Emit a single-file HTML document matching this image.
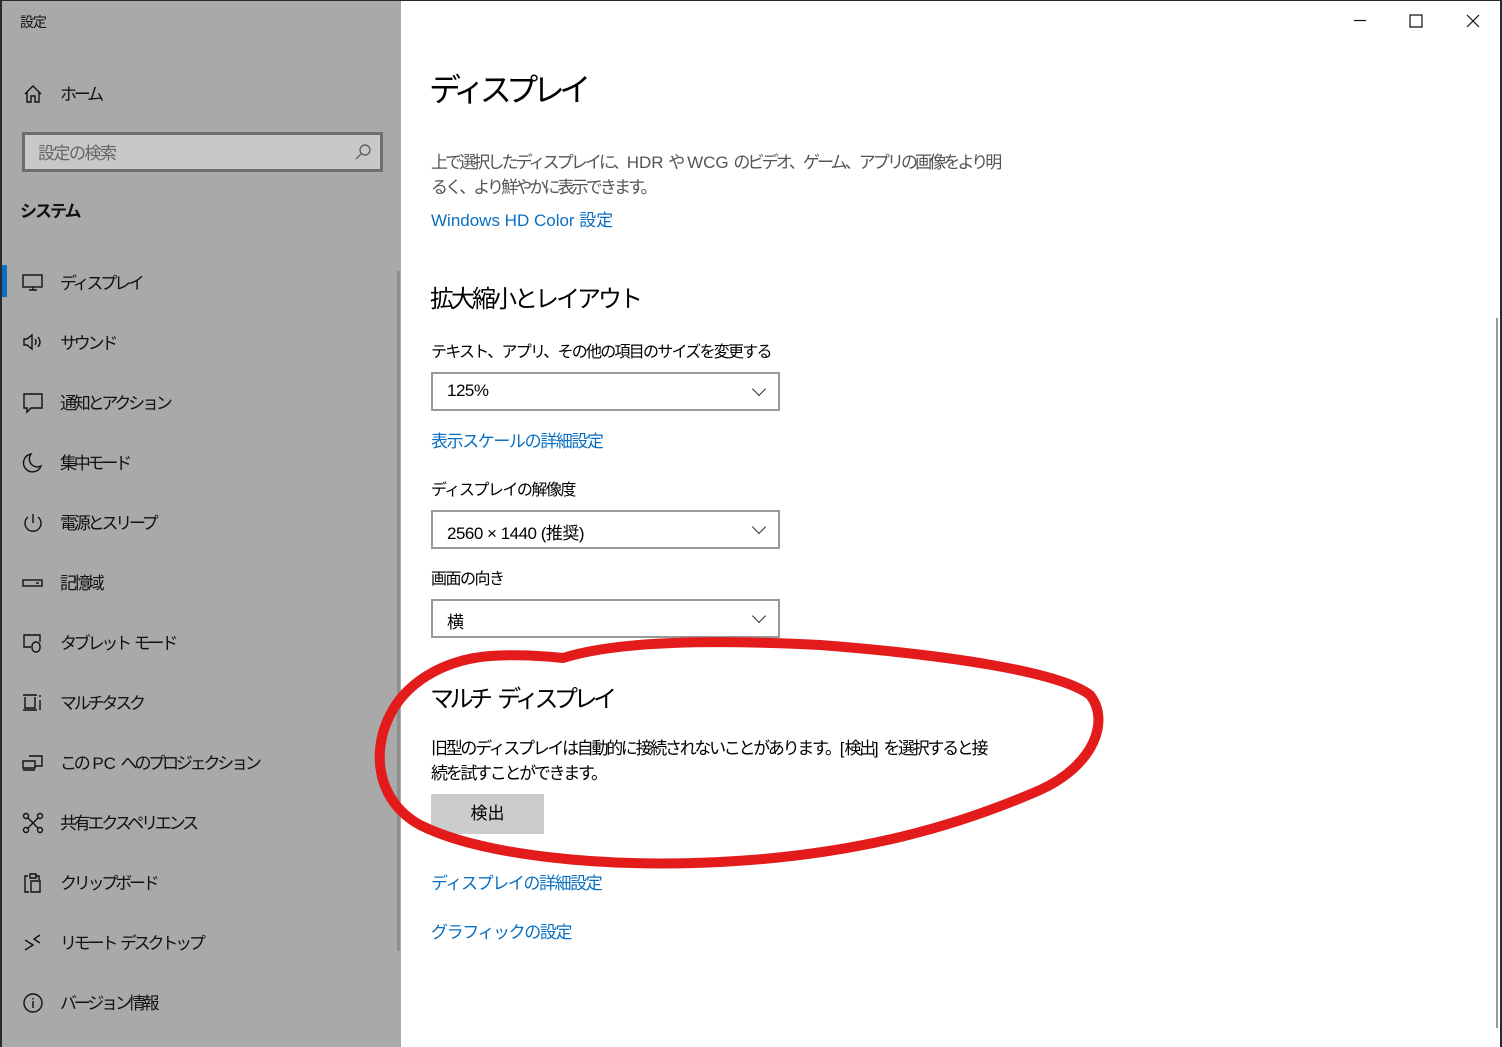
<!DOCTYPE html>
<html><head><meta charset="utf-8"><style>
*{margin:0;padding:0;box-sizing:border-box}
body{width:1502px;height:1047px;position:relative;overflow:hidden;background:#fff;font-family:"Liberation Sans","Noto Sans CJK JP",sans-serif;color:#000}
.side{position:absolute;left:0;top:0;width:401px;height:1047px;background:#a9a9a9;border-left:2px solid #2a2a2a;border-top:1px solid #2a2a2a}
.t{position:absolute;white-space:nowrap}
.nav{position:absolute;left:58px;font-size:17px;color:#111;letter-spacing:-3.2px;white-space:nowrap}
.ic{position:absolute;left:20px}
.lnk{color:#0a6fc2!important;font-size:17px;letter-spacing:-1.4px}
.sel{position:absolute;left:431px;width:349px;height:39px;border:2px solid #999;font-size:17px;padding:7px 14px;letter-spacing:-0.5px}
.sel:after{content:"";position:absolute;right:14px;top:10px;width:9px;height:9px;border-right:1.3px solid #333;border-bottom:1.3px solid #333;transform:rotate(45deg)}
.l{letter-spacing:0}
</style></head><body>
<div class="side">
<div class="t" style="left:18px;top:11px;font-size:14px;color:#111;letter-spacing:-1px">設定</div>
<svg class="ic" style="left:21px;top:83px" width="20" height="20" viewBox="0 0 20 20" fill="none" stroke="#111" stroke-width="1.4"><path d="M2 10L10 2l8 8M4 8v10h4v-6h4v6h4V8"/></svg>
<div class="nav" style="top:79px">ホーム</div>
<div style="position:absolute;left:20px;top:131px;width:361px;height:40px;border:3px solid #6e6e6e;background:#c8c8c8"></div>
<div class="t" style="left:36px;top:138px;font-size:17px;color:#666;letter-spacing:-1.5px">設定の検索</div>
<svg style="position:absolute;left:352px;top:142px" width="18" height="18" viewBox="0 0 18 18" fill="none" stroke="#555" stroke-width="1.2"><circle cx="11" cy="7" r="5"/><path d="M7.5 10.5L2 16"/></svg>
<div class="t" style="left:18px;top:196px;font-size:17px;font-weight:bold;color:#111;letter-spacing:-2px">システム</div>
<div style="position:absolute;left:0;top:264px;width:5px;height:32px;background:#0a6fc2"></div>
<div style="position:absolute;left:395px;top:270px;width:3px;height:680px;background:#8e8e8e"></div>
<svg class="ic" style="top:272px" width="22" height="20" viewBox="0 0 22 20" fill="none" stroke="#111" stroke-width="1.4"><rect x="1" y="2" width="19" height="12"/><path d="M11 14v3M7 17h8"/></svg>
<div class="nav" style="top:268px">ディスプレイ</div>
<svg class="ic" style="top:331px" width="22" height="20" viewBox="0 0 22 20" fill="none" stroke="#111" stroke-width="1.4"><path d="M2 7h3l5-4v14l-5-4H2z M13 7q2 3 0 6M16 5q4 5 0 10"/></svg>
<div class="nav" style="top:328px">サウンド</div>
<svg class="ic" style="top:391px" width="22" height="22" viewBox="0 0 22 22" fill="none" stroke="#111" stroke-width="1.4"><path d="M2 2h18v14H9l-4 4v-4H2z"/></svg>
<div class="nav" style="top:388px">通知とアクション</div>
<svg class="ic" style="top:451px" width="22" height="22" viewBox="0 0 22 22" fill="none" stroke="#111" stroke-width="1.4"><path d="M9 2a9 9 0 1 0 10 12A8 8 0 0 1 9 2z"/></svg>
<div class="nav" style="top:448px">集中モード</div>
<svg class="ic" style="top:511px" width="22" height="22" viewBox="0 0 22 22" fill="none" stroke="#111" stroke-width="1.4"><path d="M11 2v9M6 5a8 8 0 1 0 10 0"/></svg>
<div class="nav" style="top:508px">電源とスリープ</div>
<svg class="ic" style="top:572px" width="22" height="20" viewBox="0 0 22 20" fill="none" stroke="#111" stroke-width="1.4"><rect x="1" y="7" width="19" height="6"/><path d="M14 10h3"/></svg>
<div class="nav" style="top:568px">記憶域</div>
<svg class="ic" style="top:631px" width="22" height="22" viewBox="0 0 22 22" fill="none" stroke="#111" stroke-width="1.4"><path d="M9 15H2V3h16v7"/><rect x="10" y="10" width="8" height="10" rx="4"/></svg>
<div class="nav" style="top:628px">タブレット<span class="l"> </span>モード</div>
<svg class="ic" style="top:691px" width="22" height="22" viewBox="0 0 22 22" fill="none" stroke="#111" stroke-width="1.4"><path d="M1 3h14M1 18h14M3 5v11h10V5M18 3v2M18 8v10"/></svg>
<div class="nav" style="top:688px">マルチタスク</div>
<svg class="ic" style="top:751px" width="22" height="22" viewBox="0 0 22 22" fill="none" stroke="#111" stroke-width="1.4"><path d="M7 4h13v10h-7M1 9h12v7H1zM1 18h12"/></svg>
<div class="nav" style="top:748px">この<span class="l"> PC </span>へのプロジェクション</div>
<svg class="ic" style="top:811px" width="22" height="22" viewBox="0 0 22 22" fill="none" stroke="#111" stroke-width="1.4"><circle cx="4" cy="4" r="2.5"/><circle cx="18" cy="4" r="2.5"/><circle cx="4" cy="18" r="2.5"/><circle cx="18" cy="18" r="2.5"/><path d="M6 6l10 10M16 6L6 16"/></svg>
<div class="nav" style="top:808px">共有エクスペリエンス</div>
<svg class="ic" style="top:871px" width="22" height="22" viewBox="0 0 22 22" fill="none" stroke="#111" stroke-width="1.4"><path d="M6 4H3v16h4M8 2h6v4H8zM14 4h3v4M9 9h9v11H9z"/></svg>
<div class="nav" style="top:868px">クリップボード</div>
<svg class="ic" style="top:931px" width="22" height="22" viewBox="0 0 22 22" fill="none" stroke="#111" stroke-width="1.4"><path d="M3 8l8 5-8 5M18 3l-6 4 6 4"/></svg>
<div class="nav" style="top:928px">リモート<span class="l"> </span>デスクトップ</div>
<svg class="ic" style="top:991px" width="22" height="22" viewBox="0 0 22 22" fill="none" stroke="#111" stroke-width="1.4"><circle cx="11" cy="11" r="9"/><path d="M11 9v7M11 6v1.5"/></svg>
<div class="nav" style="top:988px">バージョン情報</div>
</div>
<div style="position:absolute;left:401px;top:0;width:1101px;height:1px;background:#2a2a2a"></div>
<div style="position:absolute;left:1500px;top:0;width:2px;height:1047px;background:#2a2a2a"></div>
<div style="position:absolute;left:1496px;top:318px;width:2px;height:710px;background:#999"></div>
<svg style="position:absolute;left:1350px;top:12px" width="140" height="20" fill="none" stroke="#111" stroke-width="1.2"><path d="M4 8.5h12M60 3h12v12H60zM117 3l12 12M129 3l-12 12"/></svg>
<div class="t" style="left:429px;top:65px;font-size:32px;letter-spacing:-5.5px">ディスプレイ</div>
<div class="t" style="left:431px;top:150px;font-size:17px;line-height:25px;color:#555;letter-spacing:-2.9px">上で選択したディスプレイに、<span class="l">HDR </span>や<span class="l"> WCG </span>のビデオ、ゲーム、アプリの画像をより明<br>るく、より鮮やかに表示できます。</div>
<div class="t lnk" style="left:431px;top:206px;letter-spacing:0">Windows HD Color 設定</div>
<div class="t" style="left:430px;top:279px;font-size:24px;letter-spacing:-3px">拡大縮小とレイアウト</div>
<div class="t" style="left:431px;top:338px;font-size:16px;letter-spacing:-1.75px">テキスト、アプリ、その他の項目のサイズを変更する</div>
<div class="sel" style="top:372px">125%</div>
<div class="t lnk" style="left:431px;top:427px">表示スケールの詳細設定</div>
<div class="t" style="left:431px;top:476px;font-size:16px;letter-spacing:-1.5px">ディスプレイの解像度</div>
<div class="sel" style="top:510px">2560 × 1440 (推奨)</div>
<div class="t" style="left:431px;top:565px;font-size:16px;letter-spacing:-1.5px">画面の向き</div>
<div class="sel" style="top:599px">横</div>
<div class="t" style="left:430px;top:679px;font-size:24px;letter-spacing:-4.5px">マルチ<span style="letter-spacing:2px"> </span>ディスプレイ</div>
<div class="t" style="left:431px;top:736px;font-size:17px;line-height:25px;letter-spacing:-2.3px">旧型のディスプレイは自動的に接続されないことがあります。<span class="l">[</span>検出<span class="l">] </span>を選択すると接<br>続を試すことができます。</div>
<div style="position:absolute;left:431px;top:794px;width:113px;height:40px;background:#ccc;font-size:17px;text-align:center;line-height:40px">検出</div>
<div class="t lnk" style="left:431px;top:869px">ディスプレイの詳細設定</div>
<div class="t lnk" style="left:431px;top:918px">グラフィックの設定</div>
<svg style="position:absolute;left:0;top:0" width="1502" height="1047" fill="none" stroke="#e31b1b" stroke-width="10" stroke-linecap="round"><path d="M563 658 C620 640 720 640 820 645 C950 655 1060 672 1090 695 C1110 720 1095 765 1040 790 C960 825 860 855 720 862 C600 868 480 855 420 825 C375 800 372 750 390 715 C405 685 440 660 490 656 C520 654 545 656 563 658"/></svg>
</body></html>
